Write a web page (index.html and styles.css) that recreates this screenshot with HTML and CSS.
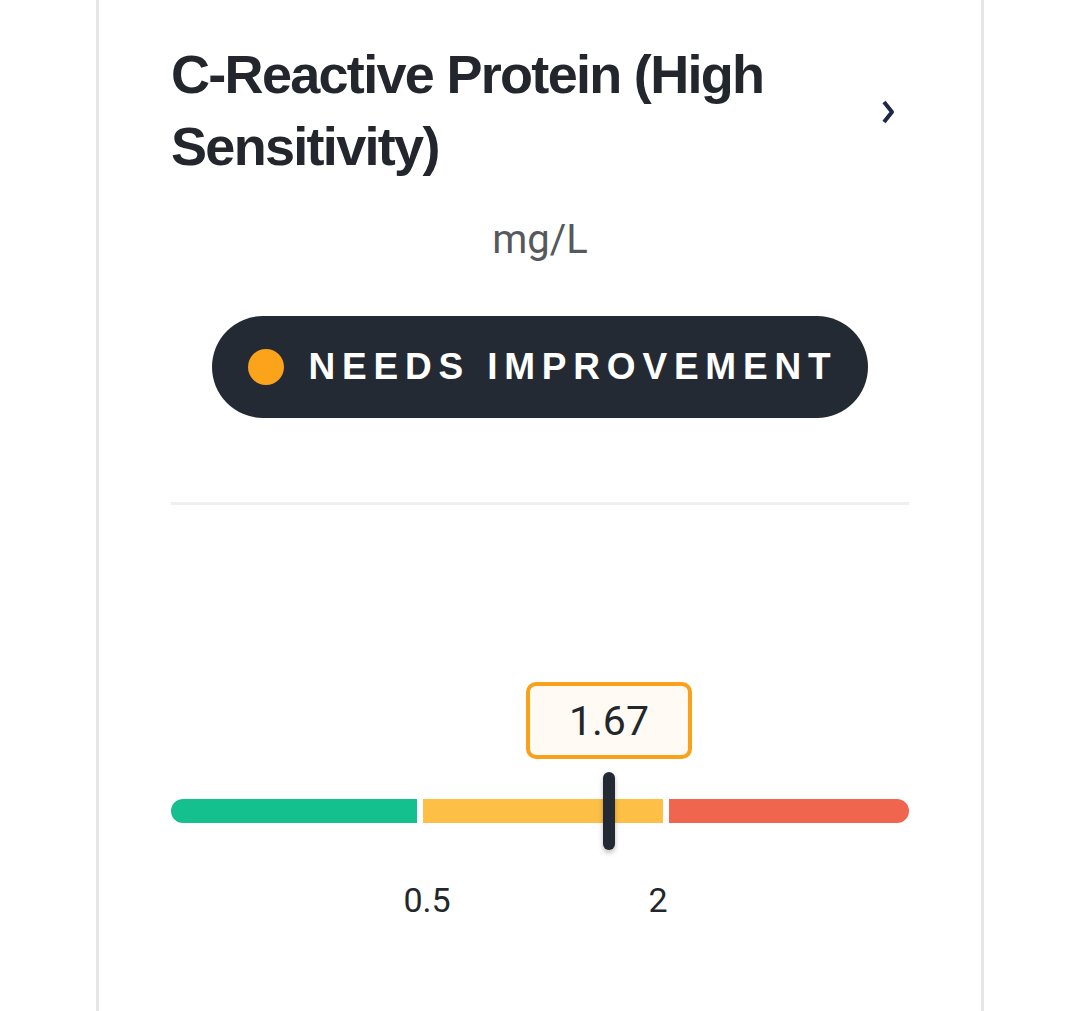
FILE: index.html
```html
<!DOCTYPE html>
<html lang="en">
<head>
<meta charset="utf-8">
<title>C-Reactive Protein</title>
<link rel="stylesheet" href="styles.css">
</head>
<body>
<div class="card">
  <div class="title-row">
    <h2 class="title">C-Reactive Protein (High Sensitivity)</h2>
    <svg class="chevron" width="14" height="26" viewBox="0 0 14 26" aria-hidden="true">
      <path d="M3 3 L11 13 L3 23" fill="none" stroke="#1e2a45" stroke-width="4" stroke-linejoin="round"/>
    </svg>
  </div>
  <div class="unit">mg/L</div>
  <div class="badge-wrap">
    <div class="badge"><span class="dot"></span><span class="badge-text">NEEDS IMPROVEMENT</span></div>
  </div>
  <div class="divider"></div>
  <div class="scale">
    <div class="tip" style="left:59.35%">1.67</div>
    <div class="track">
      <div class="seg seg-green"></div>
      <div class="seg seg-yellow"></div>
      <div class="seg seg-red"></div>
    </div>
    <div class="marker" style="left:59.35%"></div>
    <div class="ticks">
      <span class="tick" style="left:34.7%">0.5</span>
      <span class="tick" style="left:66%">2</span>
    </div>
  </div>
</div>
</body>
</html>
```
FILE: styles.css
```css
html, body {
  margin: 0;
  padding: 0;
  background: #ffffff;
}
body {
  height: 1011px;
  overflow: hidden;
}
.card {
  box-sizing: border-box;
  margin-left: 96px;
  width: 888px;
  min-height: 1011px;
  border-left: 3px solid #e6e6e6;
  border-right: 3px solid #e6e6e6;
  padding: 38px 72px 0 72px;
}
.title-row {
  display: flex;
  align-items: center;
  justify-content: space-between;
}
.title {
  margin: 0;
  font-family: "Liberation Sans", Arial, sans-serif;
  font-weight: 700;
  font-size: 54px;
  line-height: 72px;
  letter-spacing: -1.7px;
  color: #23272d;
}
.chevron {
  flex: none;
  margin-right: 14px;
  margin-top: 4px;
}
.unit {
  margin-top: 36px;
  text-align: center;
  font-family: Roboto, "Noto Sans", sans-serif;
  font-size: 40px;
  line-height: 44px;
  color: #55595e;
}
.badge-wrap {
  display: flex;
  justify-content: center;
  margin-top: 54px;
}
.badge {
  display: inline-flex;
  align-items: center;
  box-sizing: border-box;
  height: 102px;
  padding: 0 31px 0 36px;
  border-radius: 51px;
  background: #232a33;
}
.dot {
  width: 36px;
  height: 36px;
  border-radius: 50%;
  background: #fba31a;
  margin-right: 25px;
}
.badge-text {
  font-family: "Liberation Sans", Arial, sans-serif;
  font-weight: 700;
  font-size: 37px;
  letter-spacing: 6.8px;
  color: #ffffff;
}
.divider {
  margin-top: 84px;
  height: 3px;
  background: #efefef;
}
.scale {
  position: relative;
  margin-top: 177px;
  padding-top: 117px;
}
.tip {
  position: absolute;
  top: 0;
  transform: translateX(-50%);
  box-sizing: border-box;
  width: 166px;
  height: 77px;
  border: 4px solid #f9a11b;
  border-radius: 10px;
  background: #fffaf4;
  display: flex;
  align-items: center;
  justify-content: center;
  font-family: Roboto, "Noto Sans", sans-serif;
  font-size: 41px;
  color: #23272b;
}
.track {
  display: grid;
  grid-template-columns: 246fr 240fr 240fr;
  column-gap: 6px;
  height: 24px;
}
.seg-green {
  background: #13c08e;
  border-radius: 12px 0 0 12px;
}
.seg-yellow {
  background: #fdbf46;
}
.seg-red {
  background: #f0654d;
  border-radius: 0 12px 12px 0;
}
.marker {
  position: absolute;
  top: 90px;
  width: 12px;
  height: 78px;
  border-radius: 6px;
  background: #232a33;
  transform: translateX(-50%);
  box-shadow: 0 3px 5px rgba(0, 0, 0, 0.25);
}
.ticks {
  position: relative;
  margin-top: 57px;
  height: 40px;
}
.tick {
  position: absolute;
  top: 0;
  transform: translateX(-50%);
  font-family: Roboto, "Noto Sans", sans-serif;
  font-size: 34px;
  line-height: 40px;
  color: #23272b;
}
```
